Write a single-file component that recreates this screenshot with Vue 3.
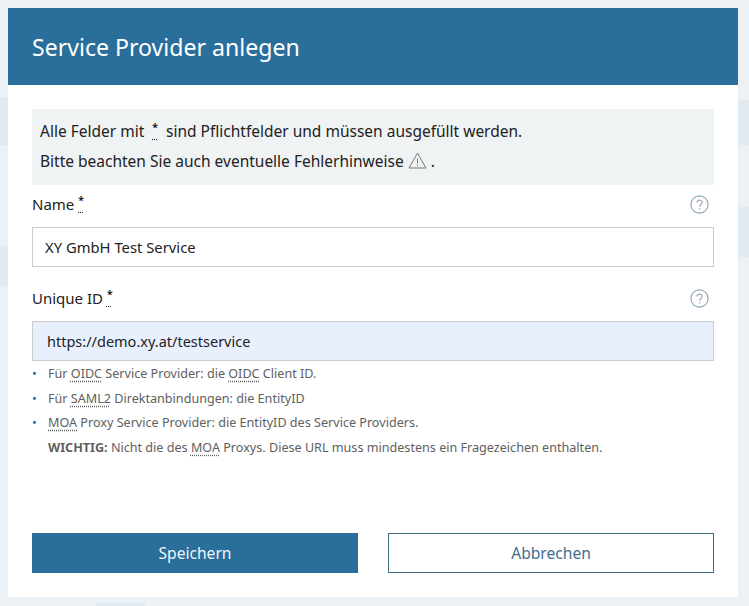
<script setup>
const helpLines = [
  { parts: ['Für ', ['OIDC'], ' Service Provider: die ', ['OIDC'], ' Client ID.'] },
  { parts: ['Für ', ['SAML2'], ' Direktanbindungen: die EntityID'] },
  { parts: [['MOA'], ' Proxy Service Provider: die EntityID des Service Providers.'] },
]
</script>

<template>
  <div class="page">
    <div class="dialog">
      <header class="head"><h1>Service Provider anlegen</h1></header>
      <div class="body">
        <div class="note">
          <p>Alle Felder mit <abbr class="req big">*</abbr> sind Pflichtfelder und müssen ausgefüllt werden.</p>
          <p>Bitte beachten Sie auch eventuelle Fehlerhinweise <svg class="warn" width="19" height="17" viewBox="0 0 19 17"><path d="M9.5 1.2 18 16H1Z" fill="none" stroke="#777" stroke-width="1"/><path d="M9.5 6.5v5M9.5 12.8v1.3" stroke="#777" stroke-width="1"/></svg> .</p>
        </div>
        <div class="label-row">
          <label>Name <abbr class="req">*</abbr></label>
          <svg class="help" width="19" height="19" viewBox="0 0 19 19"><circle cx="9.5" cy="9.5" r="8.6" fill="none" stroke="#86a8bb" stroke-width="1.1"/><path d="M7 7.4c0-3.2 5.2-3.2 5.2-.1 0 2-2.5 2.1-2.5 4.4M9.7 13.2v1.3" fill="none" stroke="#99a" stroke-width="1.1"/></svg>
        </div>
        <div class="input">XY GmbH Test Service</div>
        <div class="label-row second">
          <label>Unique ID <abbr class="req">*</abbr></label>
          <svg class="help" width="19" height="19" viewBox="0 0 19 19"><circle cx="9.5" cy="9.5" r="8.6" fill="none" stroke="#86a8bb" stroke-width="1.1"/><path d="M7 7.4c0-3.2 5.2-3.2 5.2-.1 0 2-2.5 2.1-2.5 4.4M9.7 13.2v1.3" fill="none" stroke="#99a" stroke-width="1.1"/></svg>
        </div>
        <div class="input filled">https://demo.xy.at/testservice</div>
        <ul class="hints">
          <li v-for="(l, i) in helpLines" :key="i">
            <template v-for="(p, j) in l.parts" :key="j">
              <abbr v-if="Array.isArray(p)">{{ p[0] }}</abbr>
              <template v-else>{{ p }}</template>
            </template>
          </li>
          <li class="plain"><b>WICHTIG:</b> Nicht die des <abbr>MOA</abbr> Proxys. Diese URL muss mindestens ein Fragezeichen enthalten.</li>
        </ul>
        <div class="actions">
          <button class="btn primary">Speichern</button>
          <button class="btn ghost">Abbrechen</button>
        </div>
      </div>
    </div>
  </div>
</template>

<style>
html, body { margin: 0; background: #ebf1f5; }
</style>

<style scoped>
.page {
  width: 749px;
  height: 606px;
  box-sizing: border-box;
  padding: 8px 11px 9px 8px;
  background-color: #ebf1f5;
  background-repeat: no-repeat;
  background-image:
    linear-gradient(#e1eaf0, #e1eaf0),
    linear-gradient(#e1eaf0, #e1eaf0),
    linear-gradient(#e1eaf0, #e1eaf0),
    linear-gradient(#e1eaf0, #e1eaf0),
    linear-gradient(#e1eaf0, #e1eaf0);
  background-size: 8px 48px, 8px 40px, 11px 45px, 11px 50px, 49px 3px;
  background-position: 0 97px, 0 246px, 738px 100px, 738px 207px, 96px 603px;
  font-family: "Noto Sans", sans-serif;
  color: #222;
  overflow: hidden;
}
.dialog { background: #fff; height: 589px; display: flex; flex-direction: column; }
.head { height: 77px; background: #2a6e9c; display: flex; align-items: center; padding: 0 24px; flex: none; }
h1 { margin: 0; font-size: 23.1px; font-weight: 400; color: #fff; }
.body { padding: 24px 24px 24px; flex: 1; display: flex; flex-direction: column; }
.note { background: #f0f3f4; height: 76px; box-sizing: border-box; padding: 7px 8px 0; font-size: 15.5px; }
.note p { margin: 0; line-height: 30px; height: 30px; }
abbr { text-decoration: underline dotted; text-underline-offset: 3px; }
.req { font-size: 10.5px; font-weight: 700; vertical-align: 6px; line-height: 1; text-underline-offset: 8px; }
.req.big { margin: 0 4px; }
.warn { vertical-align: -2px; }
.label-row { display: flex; justify-content: space-between; align-items: center; height: 38px; padding-right: 5px; margin-bottom: 4px; }
.second { margin-top: 12px; }
label { font-size: 15px; }
.input { height: 40px; box-sizing: border-box; border: 1px solid #ccc; padding: 0 12px; display: flex; align-items: center; font-size: 14.8px; }
.filled { background: #e8f0fe; padding: 0 14px; font-size: 14.5px; }
.hints { list-style: none; margin: 0; padding: 1px 0 0 16px; font-size: 12.6px; color: #606060; }
.hints li { height: 24.5px; line-height: 24.5px; position: relative; }
.hints li::before { content: "•"; position: absolute; left: -16px; color: #2a6e9c; }
.hints li.plain::before { content: none; }
.actions { margin-top: auto; display: grid; grid-template-columns: 326px 326px; justify-content: space-between; }
.btn { height: 40px; font: inherit; font-size: 15.6px; border: 1px solid #2a6e9c; padding: 0; }
.primary { background: #2a6e9c; color: #eef7fb; }
.ghost { background: #fff; color: #3f6e8e; border-color: #3d6c80; }
</style>
